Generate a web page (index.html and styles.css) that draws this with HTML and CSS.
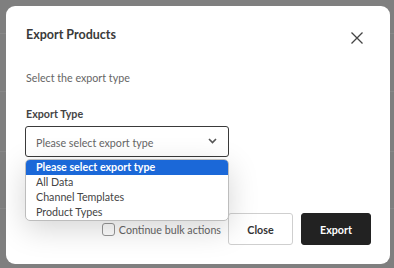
FILE: index.html
```html
<!DOCTYPE html>
<html>
<head>
<meta charset="utf-8">
<link rel="stylesheet" href="styles.css">
</head>
<body>
<div class="page">
  <div class="row r1"></div>
  <div class="row r2"></div>
  <div class="row r3"></div>
  <div class="row r4"></div>
</div>
<div class="modal">
  <div class="header">
    <div class="title">Export Products</div>
    <svg class="close-x" width="12" height="12" viewBox="0 0 12 12"><path d="M0.5 0.5L11.5 11.5M11.5 0.5L0.5 11.5" stroke="#444" stroke-width="1.3" fill="none"/></svg>
  </div>
  <div class="subtitle">Select the export type</div>
  <div class="label">Export Type</div>
  <div class="select">
    <span class="placeholder">Please select export type</span>
    <svg class="chev" width="9" height="6" viewBox="0 0 9 6"><path d="M1 1L4.5 4.5L8 1" stroke="#555" stroke-width="1.6" fill="none"/></svg>
  </div>
  <div class="footer">
    <label class="check"><span class="box"></span><span class="check-text">Continue bulk actions</span></label>
    <button class="btn btn-close">Close</button>
    <button class="btn btn-export">Export</button>
  </div>
  <div class="dropdown">
    <div class="opt active">Please select export type</div>
    <div class="opt">All Data</div>
    <div class="opt">Channel Templates</div>
    <div class="opt">Product Types</div>
  </div>
</div>
</body>
</html>
```

FILE: styles.css
```css
html, body {
  margin: 0;
  padding: 0;
}
body {
  background: #7f7f7f;
  width: 394px;
  height: 268px;
  overflow: hidden;
  font-family: "Lato", "Noto Sans", sans-serif;
}
.row {
  border-bottom: 1px solid #888888;
}
.r1 { height: 33px; }
.r2 { height: 57px; }
.r3 { height: 59px; }
.r4 { height: 56px; }

.modal {
  position: absolute;
  left: 6px;
  top: 6px;
  width: 384px;
  height: 258px;
  box-sizing: border-box;
  background: #fff;
  border-radius: 9px;
  padding: 20px 19px 0 19px;
}
.header {
  display: flex;
  justify-content: space-between;
  align-items: flex-start;
  height: 18px;
}
.title {
  font-size: 12.5px;
  line-height: 18px;
  font-weight: 700;
  color: #3a3a3a;
  padding-left: 1px;
}
.close-x {
  margin-top: 6px;
  margin-right: 8px;
}
.subtitle {
  margin-top: 26px;
  font-size: 10.7px;
  line-height: 16px;
  color: #666;
  padding-left: 1px;
}
.label {
  margin-top: 20px;
  font-size: 10.7px;
  line-height: 16px;
  font-weight: 700;
  color: #444;
  padding-left: 1px;
}
.select {
  margin-top: 4px;
  width: 204px;
  height: 31px;
  box-sizing: border-box;
  border: 1px solid #3a3a3a;
  border-radius: 3px;
  display: flex;
  align-items: center;
  justify-content: space-between;
  padding: 2px 11px 0 10px;
}
.placeholder {
  font-size: 10.7px;
  color: #666;
}
.chev {
  margin-bottom: 3px;
}
.footer {
  margin-top: 56px;
  display: flex;
  justify-content: flex-end;
  align-items: center;
}
.check {
  display: flex;
  align-items: center;
  margin-right: 7px;
}
.box {
  width: 13px;
  height: 13px;
  box-sizing: border-box;
  border: 1px solid #999;
  border-radius: 3px;
  margin-right: 4px;
}
.check-text {
  font-size: 10.7px;
  color: #666;
}
.btn {
  height: 32px;
  box-sizing: border-box;
  border-radius: 3px;
  font-family: inherit;
  font-size: 10.7px;
  font-weight: 700;
  padding: 0;
}
.btn-close {
  width: 65px;
  background: #fff;
  border: 1px solid #cfcfcf;
  color: #333;
}
.btn-export {
  width: 70px;
  margin-left: 8px;
  background: #222;
  border: 1px solid #222;
  color: #fff;
}
.dropdown {
  position: absolute;
  left: 19px;
  top: 153px;
  width: 204px;
  box-sizing: border-box;
  background: #fff;
  border: 1px solid #bdbdbd;
  border-radius: 5px;
  overflow: hidden;
  box-shadow: 0 8px 30px rgba(0,0,0,0.17);
}
.opt {
  height: 15px;
  line-height: 13px;
  font-size: 10.7px;
  color: #444;
  padding-left: 10px;
}
.opt.active {
  background: #1b68d8;
  color: #fff;
  font-weight: 700;
}
```
